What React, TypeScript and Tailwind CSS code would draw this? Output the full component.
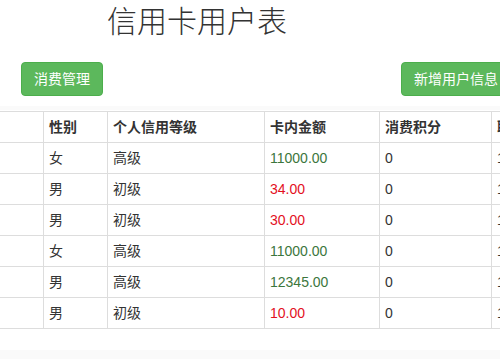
import React from "react";

const rows = [
  { sex: "女", level: "高级", amount: "11000.00", ok: true, score: "0", phone: "13800138000" },
  { sex: "男", level: "初级", amount: "34.00", ok: false, score: "0", phone: "13912345678" },
  { sex: "男", level: "初级", amount: "30.00", ok: false, score: "0", phone: "13612345678" },
  { sex: "女", level: "高级", amount: "11000.00", ok: true, score: "0", phone: "13712345678" },
  { sex: "男", level: "高级", amount: "12345.00", ok: true, score: "0", phone: "13512345678" },
  { sex: "男", level: "初级", amount: "10.00", ok: false, score: "0", phone: "13312345678" },
];

const font = { fontFamily: '"Liberation Sans", "Noto Sans CJK SC", sans-serif' };

function Row({ cells, header }: { cells: React.ReactNode[]; header?: boolean }) {
  const widths = ["w-[44px]", "w-[64px]", "w-[157px]", "w-[115px]", "w-[112px]", "w-[160px]"];
  return (
    <div className={`flex h-[31px] border-b border-[#ddd] shrink-0 ${header ? "font-bold" : ""}`}>
      {cells.map((c, i) => (
        <div
          key={i}
          className={`${widths[i]} shrink-0 ${i < 5 ? "border-r border-[#ddd]" : ""} pl-[5px] flex items-center whitespace-nowrap overflow-hidden`}
        >
          {c}
        </div>
      ))}
    </div>
  );
}

export default function App() {
  return (
    <div className="w-[500px] h-[359px] overflow-hidden bg-white text-[14px] text-[#333] leading-[20px]" style={font}>
      <div className="pl-[107px] pt-[3px] h-[40px]">
        <h1 className="text-[30px] leading-[33px] font-light text-[#333]" style={{ fontFamily: '"Noto Sans CJK SC", sans-serif' }}>
          信用卡用户表
        </h1>
      </div>
      <div className="flex pt-[22px] pl-[21px] w-[700px]">
        <button className="h-[34px] px-[12px] rounded-[4px] bg-[#5cb85c] border border-[#4cae4c] text-white text-[14px] shrink-0">
          消费管理
        </button>
        <button className="ml-[298px] h-[34px] px-[12px] rounded-[4px] bg-[#5cb85c] border border-[#4cae4c] text-white text-[14px] shrink-0">
          新增用户信息
        </button>
      </div>
      <div className="mt-[10px] h-[4px] bg-[#fafafa]" />
      <div className="mt-px w-[700px] border-t border-[#ddd] flex flex-col">
        <Row header cells={["", "性别", "个人信用等级", "卡内金额", "消费积分", "联系电话"]} />
        {rows.map((r, i) => (
          <Row
            key={i}
            cells={[
              "",
              r.sex,
              r.level,
              <span className={r.ok ? "text-[#3c763d]" : "text-[#e3101e]"}>{r.amount}</span>,
              r.score,
              r.phone,
            ]}
          />
        ))}
      </div>
      <div className="mt-[21px] h-[9px] bg-[#fafafa]" />
    </div>
  );
}
